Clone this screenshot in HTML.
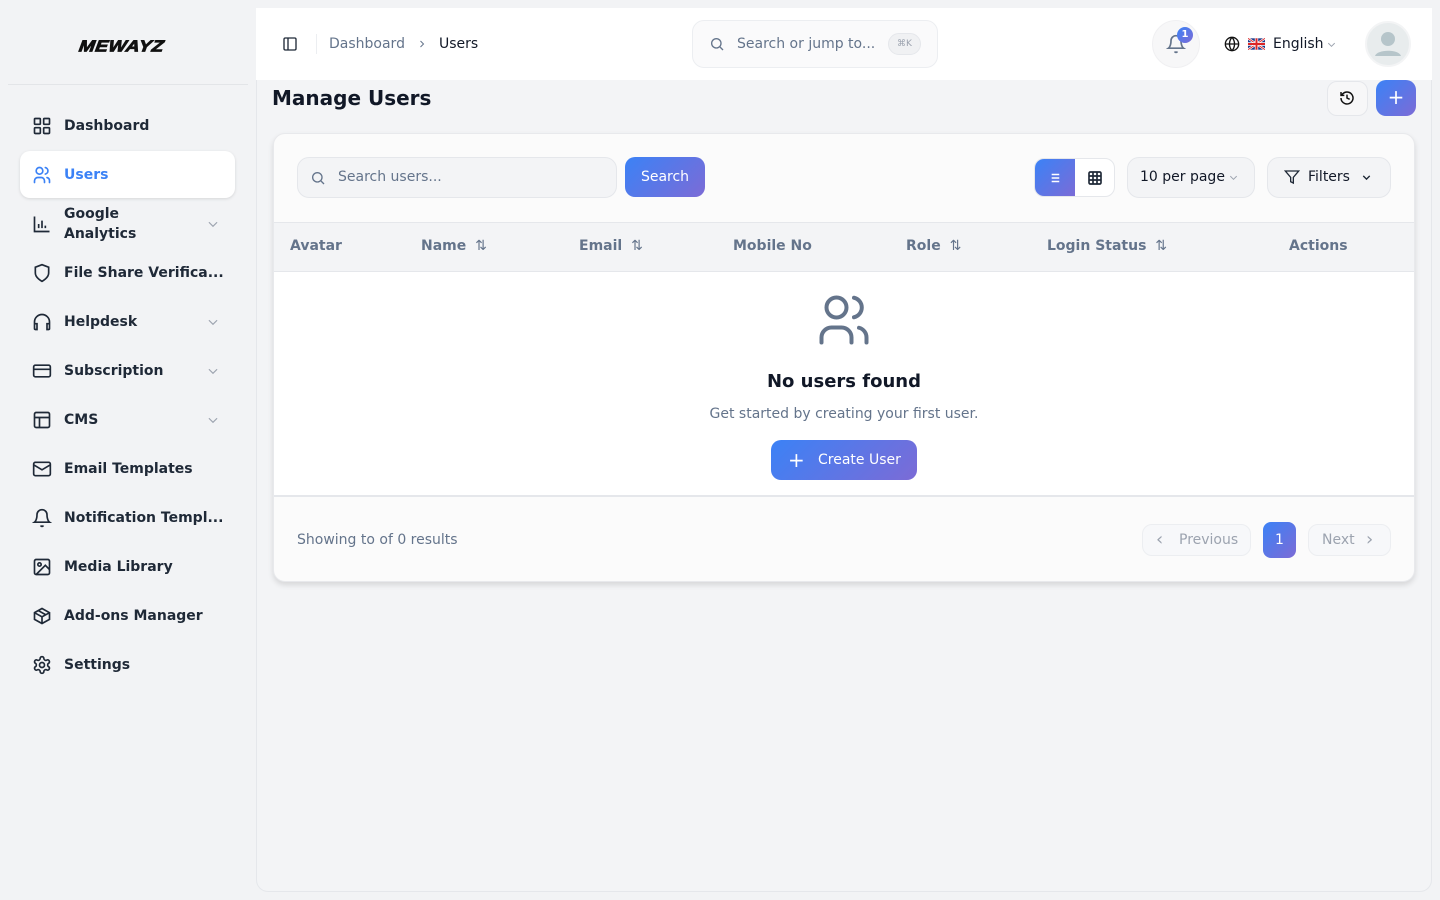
<!DOCTYPE html>
<html><head><meta charset="utf-8"><style>
*{box-sizing:border-box;margin:0;padding:0}
body{width:1440px;height:900px;background:#f2f3f5;font-family:"DejaVu Sans","Liberation Sans",sans-serif;color:#111827;position:relative;overflow:hidden;font-size:14px}
.abs{position:absolute}
svg{display:block}
.side .item{position:absolute;left:20px;width:215px;height:47px;display:flex;align-items:center;font-weight:bold;font-size:14px;color:#1f2937}
.side .item svg{position:absolute;left:12px}
.side .item span{position:absolute;left:44px;line-height:20px}
.side .item svg.chev{position:absolute;left:186px}
.main{left:256px;top:8px;width:1176px;height:884px;background:#f3f4f6;border-radius:0 0 12px 12px;border:1px solid #e5e7eb;border-top:none}
.hdr{left:256px;top:8px;width:1176px;height:72px;background:#fff}
.card{left:273px;top:133px;width:1142px;height:449px;background:#fbfbfb;border-radius:12px;border:1px solid #e8e9ec;box-shadow:0 3px 6px rgba(0,0,0,.12);overflow:hidden}
.th{position:absolute;top:239px;font-weight:bold;font-size:14px;color:#64748b;line-height:1}
.grad{background:linear-gradient(135deg,#3b82f6,#7c6bd6)}
</style></head><body>
<div class="abs" style="left:79px;top:36px;width:104px;font-family:'Liberation Sans',sans-serif;font-weight:bold;font-style:italic;font-size:19px;letter-spacing:0.5px;color:#111;transform:skewX(-8deg) scaleY(0.85);-webkit-text-stroke:1px #111">MEWAYZ</div>
<div class="abs" style="left:8px;top:84px;width:240px;height:1px;background:#e3e5e8"></div>
<div class="side">
<div class="item" style="top:102px"><svg width="20" height="20" viewBox="0 0 24 24" fill="none" stroke="#1f2937" stroke-width="2"><rect x="3" y="3" width="7" height="7" rx="1"/><rect x="14" y="3" width="7" height="7" rx="1"/><rect x="3" y="14" width="7" height="7" rx="1"/><rect x="14" y="14" width="7" height="7" rx="1"/></svg><span>Dashboard</span></div>
<div class="item" style="top:151px;background:#fff;border-radius:10px;box-shadow:0 1px 3px rgba(0,0,0,.12);color:#3b82f6"><svg width="20" height="20" viewBox="0 0 24 24" fill="none" stroke="#3b82f6" stroke-width="2" stroke-linecap="round"><circle cx="9" cy="7" r="4"/><path d="M3 21v-2a4 4 0 0 1 4-4h4a4 4 0 0 1 4 4v2M16 3.1a4 4 0 0 1 0 7.8M21 21v-2a4 4 0 0 0-3-3.9"/></svg><span>Users</span></div>
<div class="item" style="top:200px"><svg width="20" height="20" viewBox="0 0 24 24" fill="none" stroke="#1f2937" stroke-width="2"><path d="M3 3v18h18M8 17v-5M12 17V8M16 17v-3"/></svg><span>Google<br>Analytics</span><svg class="chev" width="14" height="14" viewBox="0 0 24 24" fill="none" stroke="#9ca3af" stroke-width="2"><path d="M5 9l7 7 7-7"/></svg></div>
<div class="item" style="top:249px"><svg width="20" height="20" viewBox="0 0 24 24" fill="none" stroke="#1f2937" stroke-width="2"><path d="M12 22s8-4 8-10V5l-8-3-8 3v7c0 6 8 10 8 10z"/></svg><span>File Share Verifica...</span></div>
<div class="item" style="top:298px"><svg width="20" height="20" viewBox="0 0 24 24" fill="none" stroke="#1f2937" stroke-width="2"><path d="M3 18v-6a9 9 0 0 1 18 0v6M3 14h3v7H4a1 1 0 0 1-1-1zM21 14h-3v7h2a1 1 0 0 0 1-1z"/></svg><span>Helpdesk</span><svg class="chev" width="14" height="14" viewBox="0 0 24 24" fill="none" stroke="#9ca3af" stroke-width="2"><path d="M5 9l7 7 7-7"/></svg></div>
<div class="item" style="top:347px"><svg width="20" height="20" viewBox="0 0 24 24" fill="none" stroke="#1f2937" stroke-width="2"><rect x="2" y="5" width="20" height="14" rx="2"/><path d="M2 10h20"/></svg><span>Subscription</span><svg class="chev" width="14" height="14" viewBox="0 0 24 24" fill="none" stroke="#9ca3af" stroke-width="2"><path d="M5 9l7 7 7-7"/></svg></div>
<div class="item" style="top:396px"><svg width="20" height="20" viewBox="0 0 24 24" fill="none" stroke="#1f2937" stroke-width="2"><rect x="3" y="3" width="18" height="18" rx="2"/><path d="M3 9h18M9 21V9"/></svg><span>CMS</span><svg class="chev" width="14" height="14" viewBox="0 0 24 24" fill="none" stroke="#9ca3af" stroke-width="2"><path d="M5 9l7 7 7-7"/></svg></div>
<div class="item" style="top:445px"><svg width="20" height="20" viewBox="0 0 24 24" fill="none" stroke="#1f2937" stroke-width="2"><rect x="2" y="4" width="20" height="16" rx="2"/><path d="M22 7l-10 6L2 7"/></svg><span>Email Templates</span></div>
<div class="item" style="top:494px"><svg width="20" height="20" viewBox="0 0 24 24" fill="none" stroke="#1f2937" stroke-width="2"><path d="M6 8a6 6 0 0 1 12 0c0 7 3 9 3 9H3s3-2 3-9M10.3 21a1.9 1.9 0 0 0 3.4 0"/></svg><span>Notification Templ...</span></div>
<div class="item" style="top:543px"><svg width="20" height="20" viewBox="0 0 24 24" fill="none" stroke="#1f2937" stroke-width="2"><rect x="3" y="3" width="18" height="18" rx="2"/><circle cx="9" cy="9" r="2"/><path d="M21 15l-5-5L5 21"/></svg><span>Media Library</span></div>
<div class="item" style="top:592px"><svg width="20" height="20" viewBox="0 0 24 24" fill="none" stroke="#1f2937" stroke-width="2"><path d="M21 8l-9-5-9 5v8l9 5 9-5zM3 8l9 5 9-5M12 13v8M7.5 5.5l9 5"/></svg><span>Add-ons Manager</span></div>
<div class="item" style="top:641px"><svg width="20" height="20" viewBox="0 0 24 24" fill="none" stroke="#1f2937" stroke-width="2"><circle cx="12" cy="12" r="3"/><path d="M12.2 2h-.4a2 2 0 0 0-2 2v.2a2 2 0 0 1-1 1.7l-.4.3a2 2 0 0 1-2 0l-.2-.1a2 2 0 0 0-2.7.7l-.2.4a2 2 0 0 0 .7 2.7l.2.1a2 2 0 0 1 1 1.7v.5a2 2 0 0 1-1 1.8l-.2.1a2 2 0 0 0-.7 2.7l.2.4a2 2 0 0 0 2.7.7l.2-.1a2 2 0 0 1 2 0l.4.3a2 2 0 0 1 1 1.700v.2a2 2 0 0 0 2 2h.4a2 2 0 0 0 2-2v-.2a2 2 0 0 1 1-1.7l.4-.3a2 2 0 0 1 2 0l.2.1a2 2 0 0 0 2.7-.7l.2-.4a2 2 0 0 0-.7-2.7l-.2-.1a2 2 0 0 1-1-1.7v-.5a2 2 0 0 1 1-1.8l.2-.1a2 2 0 0 0 .7-2.7l-.2-.4a2 2 0 0 0-2.7-.7l-.2.1a2 2 0 0 1-2 0l-.4-.3a2 2 0 0 1-1-1.7V4a2 2 0 0 0-2-2z"/></svg><span>Settings</span></div>
</div>

<div class="abs main"></div>
<div class="abs hdr"></div>
<svg class="abs" style="left:282px;top:36px" width="16" height="16" viewBox="0 0 24 24" fill="none" stroke="#1f2937" stroke-width="2"><rect x="3" y="3" width="18" height="18" rx="2"/><path d="M9 3v18"/></svg>
<div class="abs" style="left:316px;top:34px;width:1px;height:20px;background:#eceef1"></div>
<div class="abs" style="left:329px;top:36px;color:#64748b">Dashboard</div>
<svg class="abs" style="left:416px;top:38px" width="12" height="12" viewBox="0 0 24 24" fill="none" stroke="#64748b" stroke-width="2"><path d="M9 6l6 6-6 6"/></svg>
<div class="abs" style="left:439px;top:36px;color:#111827">Users</div>
<div class="abs" style="left:692px;top:20px;width:246px;height:48px;border:1px solid #eceef1;border-radius:12px;background:#fafafb"></div>
<svg class="abs" style="left:709px;top:36px" width="16" height="16" viewBox="0 0 24 24" fill="none" stroke="#64748b" stroke-width="2"><circle cx="11" cy="11" r="7"/><path d="M21 21l-4.3-4.3"/></svg>
<div class="abs" style="left:737px;top:36px;color:#64748b">Search or jump to...</div>
<div class="abs" style="left:888px;top:33px;width:33px;height:22px;border-radius:11px;background:#f0f1f3;border:1px solid #e5e7eb;font-size:9px;color:#9ca3af;text-align:center;line-height:20px">⌘K</div>
<div class="abs" style="left:1152px;top:20px;width:48px;height:48px;border-radius:50%;background:#f7f7f8;border:1px solid #f0f0f2"></div>
<svg class="abs" style="left:1166px;top:34px" width="20" height="20" viewBox="0 0 24 24" fill="none" stroke="#64748b" stroke-width="2"><path d="M6 8a6 6 0 0 1 12 0c0 7 3 9 3 9H3s3-2 3-9M10.3 21a1.9 1.9 0 0 0 3.4 0"/></svg>
<div class="abs grad" style="left:1177px;top:27px;width:16px;height:16px;border-radius:50%;color:#fff;font-size:10px;font-weight:bold;text-align:center;line-height:16px">1</div>
<svg class="abs" style="left:1224px;top:36px" width="16" height="16" viewBox="0 0 24 24" fill="none" stroke="#111" stroke-width="2"><circle cx="12" cy="12" r="10"/><path d="M2 12h20M12 2a15 15 0 0 1 0 20M12 2a15 15 0 0 0 0 20"/></svg>
<svg class="abs" style="left:1248px;top:38px" width="17" height="12" viewBox="0 0 60 40"><rect width="60" height="40" fill="#1e3a8a"/><path d="M0 0L60 40M60 0L0 40" stroke="#fff" stroke-width="8"/><path d="M0 0L60 40M60 0L0 40" stroke="#dc2626" stroke-width="3"/><path d="M30 0v40M0 20h60" stroke="#fff" stroke-width="12"/><path d="M30 0v40M0 20h60" stroke="#dc2626" stroke-width="7"/></svg>
<div class="abs" style="left:1273px;top:36px">English</div>
<svg class="abs" style="left:1326px;top:39px" width="11" height="11" viewBox="0 0 24 24" fill="none" stroke="#9ca3af" stroke-width="2"><path d="M5 9l7 7 7-7"/></svg>
<div class="abs" style="left:1365px;top:21px;width:46px;height:46px;border-radius:50%;background:#e8eced;border:2px solid #f3f4f5;overflow:hidden"><svg width="42" height="42" viewBox="0 0 42 42"><circle cx="21" cy="16" r="7" fill="#b6c5ca"/><path d="M8 33c2-7 24-7 26 0z" fill="#b6c5ca"/></svg></div>

<div class="abs" style="left:272px;top:86px;font-size:20px;font-weight:bold">Manage Users</div>
<div class="abs" style="left:1327px;top:81px;width:41px;height:35px;border-radius:10px;background:#f7f7f8;border:1px solid #e5e7eb"></div>
<svg class="abs" style="left:1339px;top:90px" width="16" height="16" viewBox="0 0 24 24" fill="none" stroke="#111" stroke-width="2.2"><path d="M3 12a9 9 0 1 0 3-6.7L3 8M3 3v5h5M12 7v5l4 2"/></svg>
<div class="abs grad" style="left:1376px;top:80px;width:40px;height:36px;border-radius:10px;color:#fff;font-size:20px;text-align:center;line-height:34px">+</div>

<div class="abs card">
 <div class="abs" style="left:23px;top:23px;width:320px;height:41px;border:1px solid #e5e7eb;border-radius:12px;background:#f3f4f6"></div>
 <svg class="abs" style="left:36px;top:36px" width="16" height="16" viewBox="0 0 24 24" fill="none" stroke="#64748b" stroke-width="2"><circle cx="11" cy="11" r="7"/><path d="M21 21l-4.3-4.3"/></svg>
 <div class="abs" style="left:64px;top:35px;color:#64748b">Search users...</div>
 <div class="abs grad" style="left:351px;top:23px;width:80px;height:40px;border-radius:10px;color:#fff;text-align:center;line-height:40px">Search</div>
 <div class="abs" style="left:760px;top:24px;width:81px;height:39px;border:1px solid #e5e7eb;border-radius:10px;background:#fff;overflow:hidden"><div class="grad" style="width:40px;height:39px"></div></div>
 <svg class="abs" style="left:773px;top:37px" width="14" height="14" viewBox="0 0 24 24" fill="none" stroke="#fff" stroke-width="2.5"><path d="M8 6h13M8 12h13M8 18h13M3 6h.01M3 12h.01M3 18h.01"/></svg>
 <svg class="abs" style="left:813px;top:36px" width="16" height="16" viewBox="0 0 24 24" fill="none" stroke="#1f2937" stroke-width="2.5"><rect x="3" y="3" width="18" height="18" rx="2"/><path d="M3 9h18M3 15h18M9 3v18M15 3v18"/></svg>
 <div class="abs" style="left:853px;top:23px;width:128px;height:41px;border:1px solid #e5e7eb;border-radius:12px;background:#f3f4f6"></div>
 <div class="abs" style="left:866px;top:35px">10 per page</div>
 <svg class="abs" style="left:954px;top:38px" width="11" height="11" viewBox="0 0 24 24" fill="none" stroke="#9ca3af" stroke-width="2"><path d="M5 9l7 7 7-7"/></svg>
 <div class="abs" style="left:993px;top:23px;width:124px;height:41px;border:1px solid #e5e7eb;border-radius:12px;background:#f3f4f6"></div>
 <svg class="abs" style="left:1010px;top:35px" width="16" height="16" viewBox="0 0 24 24" fill="none" stroke="#1f2937" stroke-width="2"><path d="M22 3H2l8 9.5V19l4 2v-8.5z"/></svg>
 <div class="abs" style="left:1034px;top:35px">Filters</div>
 <svg class="abs" style="left:1086px;top:37px" width="13" height="13" viewBox="0 0 24 24" fill="none" stroke="#1f2937" stroke-width="2.5"><path d="M6 9l6 6 6-6"/></svg>
 <div class="abs" style="left:0;top:88px;width:1142px;height:50px;background:#f3f4f6;border-top:1px solid #e5e7eb;border-bottom:1px solid #e5e7eb"></div>
 <div class="abs" style="left:0;top:138px;width:1142px;height:225px;background:#fff;border-bottom:2px solid #e5e7eb"></div>
</div>
<div class="th" style="left:290px">Avatar</div>
<div class="th" style="left:421px">Name <span style="font-weight:normal;margin-left:4px">⇅</span></div>
<div class="th" style="left:579px">Email <span style="font-weight:normal;margin-left:4px">⇅</span></div>
<div class="th" style="left:733px">Mobile No</div>
<div class="th" style="left:906px">Role <span style="font-weight:normal;margin-left:4px">⇅</span></div>
<div class="th" style="left:1047px">Login Status <span style="font-weight:normal;margin-left:4px">⇅</span></div>
<div class="th" style="left:1289px">Actions</div>
<svg class="abs" style="left:812px;top:290px" width="64" height="60" viewBox="0 0 24 24" fill="none" stroke="#64748b" stroke-width="1.6" stroke-linecap="round"><circle cx="9" cy="7" r="4"/><path d="M3 21v-2a4 4 0 0 1 4-4h4a4 4 0 0 1 4 4v2M16 3.1a4 4 0 0 1 0 7.8M21 21v-2a4 4 0 0 0-3-3.9"/></svg>
<div class="abs" style="left:0;width:1688px;top:371px;text-align:center;font-size:18px;font-weight:bold">No users found</div>
<div class="abs" style="left:0;width:1688px;top:406px;text-align:center;color:#64748b">Get started by creating your first user.</div>
<div class="abs grad" style="left:771px;top:440px;width:146px;height:40px;border-radius:10px;color:#fff;line-height:40px"><span style="position:absolute;left:17px;font-size:20px">+</span><span style="position:absolute;left:47px">Create User</span></div>
<div class="abs" style="left:297px;top:532px;color:#64748b">Showing to of 0 results</div>
<div class="abs" style="left:1142px;top:524px;width:109px;height:32px;border:1px solid #eceef1;border-radius:10px;background:#f7f8fa;color:#9ca3af;line-height:30px"><span style="position:absolute;left:13px;font-size:18px">‹</span><span style="position:absolute;left:36px">Previous</span></div>
<div class="abs grad" style="left:1263px;top:522px;width:33px;height:36px;border-radius:8px;color:#fff;text-align:center;line-height:36px">1</div>
<div class="abs" style="left:1308px;top:524px;width:83px;height:32px;border:1px solid #eceef1;border-radius:10px;background:#f7f8fa;color:#9ca3af;line-height:30px"><span style="position:absolute;left:13px">Next</span><span style="position:absolute;left:57px;font-size:18px">›</span></div>
</body></html>
